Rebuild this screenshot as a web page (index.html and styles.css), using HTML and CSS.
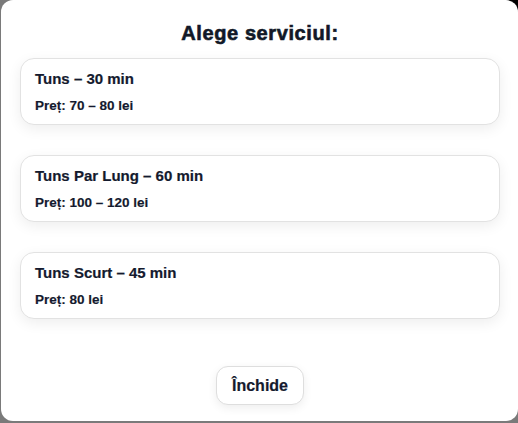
FILE: index.html
```html
<!DOCTYPE html>
<html lang="ro">
<head>
<meta charset="utf-8">
<title>Alege serviciul</title>
<link rel="stylesheet" href="styles.css">
</head>
<body>
<div class="modal">
  <h2 class="modal-title">Alege serviciul:</h2>
  <div class="service-list">
    <div class="service-card">
      <div class="service-name">Tuns – 30 min</div>
      <div class="service-price">Preț: 70 – 80 lei</div>
    </div>
    <div class="service-card">
      <div class="service-name">Tuns Par Lung – 60 min</div>
      <div class="service-price">Preț: 100 – 120 lei</div>
    </div>
    <div class="service-card">
      <div class="service-name">Tuns Scurt – 45 min</div>
      <div class="service-price">Preț: 80 lei</div>
    </div>
  </div>
  <div class="actions">
    <button class="close-btn">Închide</button>
  </div>
</div>
</body>
</html>
```

FILE: styles.css
```css
html, body {
  margin: 0;
  padding: 0;
}
body {
  width: 518px;
  height: 423px;
  overflow: hidden;
  background: radial-gradient(circle at 100% 0, #000 0 18px, transparent 19px), #7a7a7a;
  font-family: "Liberation Sans", Arial, sans-serif;
  color: #141a2e;
}
.modal {
  box-sizing: border-box;
  margin-left: 1px;
  width: 517px;
  height: 421px;
  background: #fff;
  border-radius: 12px;
  padding: 21px 18px 16px 19px;
  display: flex;
  flex-direction: column;
}
.modal-title {
  margin: 0 0 13px;
  font-size: 20px;
  line-height: 24px;
  font-weight: 700;
  text-align: center;
  letter-spacing: 0.6px;
  color: #111827;
  -webkit-text-stroke: 0.6px #111827;
}
.service-list {
  display: flex;
  flex-direction: column;
  gap: 30px;
}
.service-card {
  border: 1px solid #e2e2e2;
  border-radius: 14px;
  padding: 11px 14px 10px;
  background: #fff;
  box-shadow: 0 4px 14px rgba(0, 0, 0, 0.07);
}
.service-name {
  font-size: 15px;
  line-height: 18px;
  font-weight: 700;
  margin-bottom: 9px;
  -webkit-text-stroke: 0.2px #141a2e;
}
.service-price {
  font-size: 13.5px;
  line-height: 17px;
  font-weight: 700;
  -webkit-text-stroke: 0.15px #141a2e;
}
.actions {
  margin-top: auto;
  display: flex;
  justify-content: center;
}
.close-btn {
  font-family: "Liberation Sans", Arial, sans-serif;
  font-size: 16px;
  line-height: 19px;
  font-weight: 700;
  color: #141a2e;
  background: #fff;
  border: 1px solid #dedede;
  border-radius: 12px;
  padding: 9px 15px;
  box-shadow: 0 3px 10px rgba(0, 0, 0, 0.07);
  -webkit-text-stroke: 0.2px #141a2e;
}
```
